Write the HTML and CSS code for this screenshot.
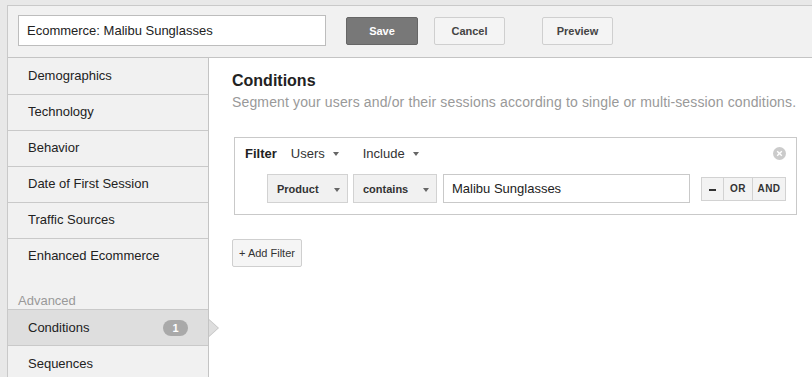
FILE: index.html
```html
<!DOCTYPE html>
<html lang="en">
  <head>
    <meta charset="UTF-8" />
    <title>Segment editor</title>
    <link rel="stylesheet" href="styles.css">
  </head>
  <body>
    <div class="panel">
      <div class="header">
        <input class="name-input" type="text" value="Ecommerce: Malibu Sunglasses" />
        <button class="btn btn-save">Save</button>
        <button class="btn btn-cancel">Cancel</button>
        <button class="btn btn-preview">Preview</button>
      </div>
      <div class="body">
        <div class="sidebar">
          <div class="group">
            <div class="item">Demographics</div>
            <div class="item">Technology</div>
            <div class="item">Behavior</div>
            <div class="item">Date of First Session</div>
            <div class="item">Traffic Sources</div>
            <div class="item">Enhanced Ecommerce</div>
          </div>
          <div class="group-label">Advanced</div>
          <div class="group group-adv">
            <div class="item active">Conditions <span class="badge">1</span></div>
            <div class="item">Sequences</div>
          </div>
        </div>
        <div class="main">
          <h2 class="title">Conditions</h2>
          <p class="subtitle">Segment your users and/or their sessions according to single or multi-session conditions.</p>
          <div class="filter-box">
            <div class="filter-head">
              <span class="filter-label">Filter</span>
              <span class="drop">Users <i class="caret"></i></span>
              <span class="drop">Include <i class="caret"></i></span>
              <span class="close">
                <svg width="13" height="13" viewBox="0 0 13 13">
                  <circle cx="6.5" cy="6.5" r="6.5" fill="#cbcbcb" />
                  <path d="M4.2 4.2 L8.8 8.8 M8.8 4.2 L4.2 8.8" stroke="#fff" stroke-width="1.4" />
                </svg>
              </span>
            </div>
            <div class="filter-row">
              <button class="sel sel-product">Product <i class="caret"></i></button>
              <button class="sel sel-contains">contains <i class="caret"></i></button>
              <input class="value-input" type="text" value="Malibu Sunglasses" />
              <div class="ops">
                <button class="op op-minus"><i class="dash"></i></button>
                <button class="op">OR</button>
                <button class="op">AND</button>
              </div>
            </div>
          </div>
          <button class="add-filter">+ Add Filter</button>
        </div>
      </div>
    </div>
  </body>
</html>
```
FILE: styles.css
```css
*,
*::before,
*::after {
  box-sizing: border-box;
  padding: 0;
  margin: 0;
}
body {
  height: 100vh;
  overflow: hidden;
  background: #e8e8e8;
  padding: 5px 0 0 7px;
  font-family: "Liberation Sans", Arial, sans-serif;
  font-size: 13px;
  color: #222;
}
.panel {
  height: 100%;
  border-top: 1px solid #c9c9c9;
  border-left: 1px solid #c9c9c9;
  background: #f1f1f1;
  display: flex;
  flex-direction: column;
}
.header {
  height: 52px;
  flex-shrink: 0;
  display: flex;
  align-items: center;
  padding: 0 0 2px 10px;
  border-bottom: 1px solid #c4c4c4;
}
.name-input {
  width: 308px;
  height: 31px;
  border: 1px solid #bdbdbd;
  background: #fff;
  padding: 0 8px;
  font-family: inherit;
  font-size: 13px;
  color: #222;
  outline: none;
}
.btn {
  height: 28px;
  width: 72px;
  border-radius: 2px;
  font-family: inherit;
  font-size: 11px;
  font-weight: bold;
  cursor: pointer;
}
.btn-save {
  margin-left: 20px;
  background: #787878;
  border: 1px solid #666;
  color: #fff;
}
.btn-cancel {
  margin-left: 16px;
  width: 71px;
  background: #f4f4f4;
  border: 1px solid #cfcfcf;
  color: #444;
}
.btn-preview {
  margin-left: 37px;
  width: 71px;
  background: #f4f4f4;
  border: 1px solid #cfcfcf;
  color: #444;
}
.body {
  flex: 1;
  display: flex;
  min-height: 0;
}
.sidebar {
  width: 201px;
  flex-shrink: 0;
  border-right: 1px solid #c4c4c4;
  background: #f1f1f1;
}
.item {
  height: 36px;
  display: flex;
  align-items: center;
  padding-left: 20px;
  padding-bottom: 1px;
  color: #222;
  position: relative;
}
.group .item + .item {
  border-top: 1px solid #c9c9c9;
  padding-bottom: 2px;
}
.group-adv {
  border-top: 1px solid #c9c9c9;
}
.group-adv .item {
  border-bottom: 1px solid #c9c9c9;
  padding-bottom: 0;
}
.group-adv .item + .item {
  border-top: none;
  padding-bottom: 0;
}
.group-label {
  padding: 19px 0 1px 10px;
  height: 35px;
  color: #999;
  font-size: 13px;
  line-height: 15px;
}
.item.active {
  background: #dedede;
}
.item.active::before,
.item.active::after {
  content: "";
  position: absolute;
  top: 50%;
  width: 0;
  height: 0;
  border-style: solid;
  transform: translateY(-50%);
}
.item.active::before {
  right: -11px;
  border-width: 9px 0 9px 10px;
  border-color: transparent transparent transparent #c4c4c4;
}
.item.active::after {
  right: -10px;
  border-width: 8px 0 8px 9px;
  border-color: transparent transparent transparent #dedede;
}
.badge {
  position: absolute;
  right: 20px;
  top: 10px;
  width: 25px;
  height: 16px;
  border-radius: 8px;
  background: #a9a9a9;
  color: #fff;
  font-size: 11px;
  font-weight: bold;
  line-height: 16px;
  text-align: center;
}
.main {
  flex: 1;
  background: #fff;
  padding: 13px 17px 0 23px;
}
.title {
  font-size: 16px;
  font-weight: bold;
  color: #222;
  line-height: 20px;
}
.subtitle {
  margin-top: 3px;
  color: #999;
  font-size: 14px;
  line-height: 17px;
  letter-spacing: 0.14px;
  white-space: nowrap;
}
.filter-box {
  margin: 26px 0 0 2px;
  height: 78px;
  border: 1px solid #c9c9c9;
  padding: 0 10px;
}
.filter-head {
  height: 31px;
  display: flex;
  align-items: center;
}
.filter-label {
  font-weight: bold;
  color: #222;
}
.drop {
  margin-left: 14px;
  margin-right: 10px;
  color: #333;
  display: flex;
  align-items: center;
}
.caret {
  display: inline-block;
  width: 0;
  height: 0;
  margin-left: 8px;
  border-style: solid;
  border-width: 4px 3.5px 0 3.5px;
  border-color: #666 transparent transparent transparent;
}
.close {
  margin-left: auto;
  margin-right: 0;
  display: flex;
}
.filter-row {
  display: flex;
  align-items: center;
  padding-left: 22px;
  margin-top: 5px;
}
.sel {
  height: 29px;
  background: #f1f1f1;
  border: 1px solid #d2d2d2;
  font-family: inherit;
  font-size: 11px;
  font-weight: bold;
  color: #333;
  display: flex;
  align-items: center;
  padding-left: 9px;
}
.sel .caret {
  margin-left: 15px;
  margin-top: 2px;
}
.sel-product {
  width: 81px;
}
.sel-contains {
  width: 84px;
  margin-left: 5px;
}
.value-input {
  margin-left: 6px;
  width: 247px;
  height: 29px;
  border: 1px solid #c9c9c9;
  padding: 0 8px;
  font-family: inherit;
  font-size: 13px;
  color: #222;
  outline: none;
}
.ops {
  margin-left: 11px;
  display: flex;
  border: 1px solid #d2d2d2;
  height: 24px;
}
.op {
  background: #f3f3f3;
  border: none;
  border-left: 1px solid #d2d2d2;
  font-family: inherit;
  font-size: 10px;
  font-weight: bold;
  color: #333;
  letter-spacing: 0.5px;
  width: 29px;
}
.op:last-child {
  width: 33px;
}
.op-minus {
  border-left: none;
  width: 21px;
  display: flex;
  align-items: center;
  justify-content: center;
}
.dash {
  display: block;
  width: 7px;
  height: 2px;
  margin-top: 2px;
  background: #333;
}
.add-filter {
  margin-top: 24px;
  width: 70px;
  height: 28px;
  background: #f5f5f5;
  border: 1px solid #cfcfcf;
  border-radius: 2px;
  font-family: inherit;
  font-size: 11px;
  color: #333;
}
```
